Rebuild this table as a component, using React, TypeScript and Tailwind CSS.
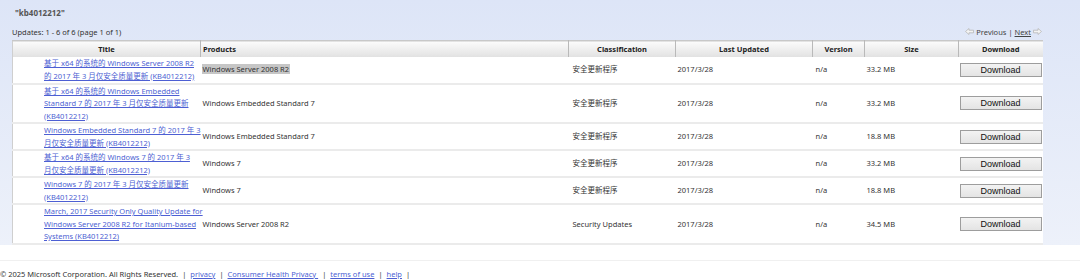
const updates = [
    {
        title: ['基于 x64 的系统的 Windows Server 2008 R2', '的 2017 年 3 月仅安全质量更新 (KB4012212)'],
        product: 'Windows Server 2008 R2',
        selected: true,
        classification: '安全更新程序',
        size: '33.2 MB',
        height: 'h-[27px]'
    },
    {
        title: ['基于 x64 的系统的 Windows Embedded', 'Standard 7 的 2017 年 3 月仅安全质量更新', '(KB4012212)'],
        product: 'Windows Embedded Standard 7',
        classification: '安全更新程序',
        size: '33.2 MB',
        height: 'h-[37px]'
    },
    {
        title: ['Windows Embedded Standard 7 的 2017 年 3', '月仅安全质量更新 (KB4012212)'],
        product: 'Windows Embedded Standard 7',
        classification: '安全更新程序',
        size: '18.8 MB',
        height: 'h-[27px]'
    },
    {
        title: ['基于 x64 的系统的 Windows 7 的 2017 年 3', '月仅安全质量更新 (KB4012212)'],
        product: 'Windows 7',
        classification: '安全更新程序',
        size: '33.2 MB',
        height: 'h-[27px]'
    },
    {
        title: ['Windows 7 的 2017 年 3 月仅安全质量更新', '(KB4012212)'],
        product: 'Windows 7',
        classification: '安全更新程序',
        size: '18.8 MB',
        height: 'h-[27px]'
    },
    {
        title: ['March, 2017 Security Only Quality Update for', 'Windows Server 2008 R2 for Itanium-based', 'Systems (KB4012212)'],
        product: 'Windows Server 2008 R2',
        classification: 'Security Updates',
        size: '34.5 MB',
        height: 'h-[34px]'
    }
];

const headers = [
    { label: 'Title', align: 'text-center' },
    { label: 'Products', align: 'text-left pl-[2px]' },
    { label: 'Classification', align: 'text-center' },
    { label: 'Last Updated', align: 'text-center' },
    { label: 'Version', align: 'text-center' },
    { label: 'Size', align: 'text-center' },
    { label: 'Download', align: 'text-center' }
];

const Arrow = ({ flip }: { flip?: boolean }) => (
    <svg width="9" height="7" viewBox="0 0 9 7" className={flip ? 'rotate-180' : ''}>
        <path d="M0.5 3.5 L4 0.5 V2.2 H8.5 V4.8 H4 V6.5 Z" fill="#f4f4f4" stroke="#b8b8b8" strokeWidth="0.8" />
    </svg>
);

const App = () => {
    return (
        <div className="w-[1080px] h-[280px] flex flex-col bg-white text-[#333] font-['Noto_Sans','Noto_Sans_CJK_SC',sans-serif] text-[7.5px] leading-[12.5px]">
            <div className="h-[246px] bg-gradient-to-b from-[#dde5f7] to-[#edf1fa] pl-3 pr-[38px] pt-[7px]">
                <div className="pl-[3px] font-bold text-[#555] text-[8px]">"kb4012212"</div>
                <div className="flex justify-between items-end mt-[6px] mb-[2px]">
                    <span>Updates: 1 - 6 of 6 (page 1 of 1)</span>
                    <span className="flex items-center gap-[2px] text-[#444]">
                        <Arrow />
                        <span>Previous</span>
                        <span>|</span>
                        <span className="underline">Next</span>
                        <Arrow flip />
                    </span>
                </div>
                <table className="w-[1030px] table-fixed border-collapse bg-white border-l border-[#cfcfcf]">
                    <colgroup>
                        <col className="w-[188px]" />
                        <col className="w-[368px]" />
                        <col className="w-[107px]" />
                        <col className="w-[137px]" />
                        <col className="w-[52px]" />
                        <col className="w-[94px]" />
                        <col className="w-[84px]" />
                    </colgroup>
                    <thead>
                        <tr className="h-[16px] bg-gradient-to-b from-[#fbfbfb] to-[#e2e2e2] border-t border-[#c8c8c8]">
                            {headers.map(h => (
                                <th
                                    key={h.label}
                                    className={`${h.align} font-bold text-[#222] border-r border-[#b9b9b9] last:border-r-0 p-0`}>
                                    {h.label}
                                </th>
                            ))}
                        </tr>
                    </thead>
                    <tbody>
                        {updates.map((u, i) => (
                            <tr key={i} className={`${u.height} border-b-2 border-[#ebebeb]`}>
                                <td className="pl-[31px] pr-1 align-middle">
                                    <a href="#" className="text-[#4d5fd3] underline whitespace-nowrap">
                                        {u.title.map((line, j) => (
                                            <span key={j} className="block">{line}</span>
                                        ))}
                                    </a>
                                </td>
                                <td className="pl-[2px] align-middle">
                                    <span className={u.selected ? 'bg-[#c6c6c6] px-[1px] -ml-[1px]' : ''}>{u.product}</span>
                                </td>
                                <td className="pl-[4px]">{u.classification}</td>
                                <td className="pl-[2px]">2017/3/28</td>
                                <td className="pl-[3px]">n/a</td>
                                <td className="pl-[2px]">{u.size}</td>
                                <td className="pl-[1px] pr-[1px]">
                                    <button className="w-[82px] h-[14px] border border-[#9d9d9d] bg-gradient-to-b from-[#f3f3f3] to-[#e4e4e4] text-[#111] font-['Liberation_Sans',Arial,sans-serif] text-[9px] leading-[12px]">
                                        Download
                                    </button>
                                </td>
                            </tr>
                        ))}
                    </tbody>
                </table>
            </div>
            <div className="mt-[15px] border-t border-[#f0f0f0] pt-[7px] whitespace-nowrap">
                © 2025 Microsoft Corporation. All Rights Reserved.
                <span className="mx-[4px]">|</span>
                <a href="#" className="text-[#4d5fd3] underline">privacy</a>
                <span className="mx-[4px]">|</span>
                <a href="#" className="text-[#4d5fd3] underline">Consumer Health Privacy </a>
                <span className="mx-[4px]">|</span>
                <a href="#" className="text-[#4d5fd3] underline">terms of use</a>
                <span className="mx-[4px]">|</span>
                <a href="#" className="text-[#4d5fd3] underline">help</a>
                <span className="mx-[4px]">|</span>
            </div>
        </div>
    );
};

export default App;
